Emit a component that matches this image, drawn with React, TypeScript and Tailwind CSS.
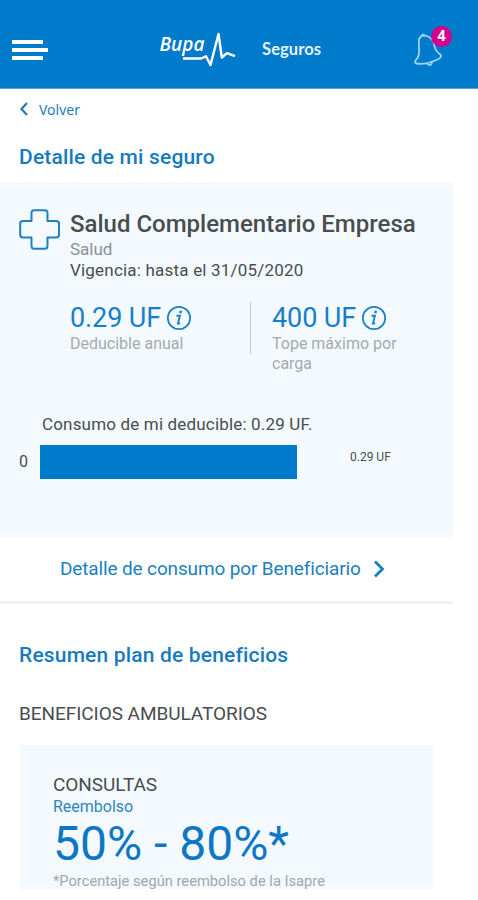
import type { ReactNode } from "react";

const plan = {
  nombre: "Salud Complementario Empresa",
  tipo: "Salud",
  vigencia: "Vigencia: hasta el 31/05/2020",
};

function InfoIcon() {
  return (
    <svg viewBox="0 0 26 26" className="w-[26px] h-[26px] shrink-0" fill="none" stroke="#1480c8">
      <circle cx="13" cy="13" r="11.2" strokeWidth="1.7" />
      <path d="M10.500 10.800H13.900L12 18.600H14.200" strokeWidth="1.900" />
      <path d="M14.300 8.300L14.900 5.800" strokeWidth="2.400" />
    </svg>
  );
}

function Amount({ value, children }: { value: string; children: ReactNode }) {
  return (
    <div>
      <div className="flex items-center h-8 gap-[5px]">
        <span className="text-[27px] leading-8 tracking-[-0.1px] text-[#1480c8]">{value}</span>
        <InfoIcon />
      </div>
      <p className="text-[16px] leading-[20px] text-[#a5abaf]">{children}</p>
    </div>
  );
}

function Header() {
  return (
    <header className="h-[89px] bg-[#007acb] border-b border-[#4da2da] flex items-start relative">
      <div className="ml-3 mt-10 flex flex-col gap-1">
        <span className="block h-[4px] w-[31px] bg-white" />
        <span className="block h-[4px] w-[36px] bg-white" />
        <span className="block h-[4px] w-[31px] bg-white" />
      </div>
      <svg viewBox="0 0 80 42" className="w-20 h-[42px] ml-[110px] mt-[28px]">
        <text x="1.5" y="23" fill="#fff" fontFamily="Open Sans" fontWeight="600" fontStyle="italic" fontSize="19">Bupa</text>
        <path d="M25 30.500H43L48 28.300L52.500 37L60.500 6L63.800 29.500L69 25.200L77 28.200" fill="none" stroke="#fff" strokeWidth="2.4" strokeLinejoin="round" />
      </svg>
      <span className="ml-[24px] mt-[38px] text-[16.5px] leading-[22px] font-bold text-[#e3f1fa] font-['Lato',sans-serif] tracking-[0.1px]">Seguros</span>
      <svg viewBox="0 0 32 36" className="absolute left-[412px] top-[32px] w-8 h-9" fill="none" stroke="#9fd3f7" strokeWidth="1.8" strokeLinejoin="round">
        <path d="M8 5.500C9.500 3.700 12.500 2.900 14.700 4C20 5.500 21.800 9.500 22.400 14C23 18 25.500 20.500 28.500 22.800C30 24.500 28.500 26 25.500 27.500C18 31 10 32.500 4.500 31.500C2.500 31 2.500 29.500 4.300 27.700C7.500 24.500 7.500 20 7 15C6.600 10 6.500 7 8 5.500Z" />
        <path d="M9 4.500L10.700 2.500L13 4M15 31C16 34.500 19.500 33.500 20 30.300" />
      </svg>
      <span className="absolute left-[431px] top-[26px] size-[21px] rounded-full bg-[#d2008c] text-white text-[15px] leading-[21px] font-bold text-center">4</span>
    </header>
  );
}

export default function App() {
  return (
    <div className="w-full h-[900px] overflow-hidden bg-white font-[Roboto,sans-serif] text-[#484d50] whitespace-nowrap">
      <Header />

      <a className="flex items-center h-[42px] pl-5 text-[#1c7dbb] text-[15px]">
        <svg viewBox="0 0 8 14" className="w-2 h-[14px] mr-[11px] mb-0.5" fill="none" stroke="#1c7dbb" strokeWidth="2.2">
          <path d="M7 1L1.500 7L7 13" />
        </svg>
        <span className="font-['Noto_Sans',sans-serif] text-[14px] mb-0.5">Volver</span>
      </a>
      <h1 className="pl-[19px] h-[51px] leading-[52px] text-[21px] tracking-[0.17px] font-medium text-[#177abf]">Detalle de mi seguro</h1>

      {/* Plan */}
      <section className="w-[453px] h-[355px] bg-[#f4f9fe] pt-[26px]">
        <div className="flex pl-[19px]">
          <svg viewBox="0 0 42 42" className="w-[42px] h-[42px] mr-[9px] mt-px" fill="none" stroke="#1c80c4" strokeWidth="2" strokeLinejoin="round">
            <path d="M15 1.200H26Q28.500 1.200 28.500 3.700V12H37Q40 12 40 14.700V25.500Q40 28.500 37 28.500H28.500V37Q28.500 39.700 26 39.700H15Q12.500 39.700 12.500 37V28.500H4Q1.200 28.500 1.200 25.500V14.700Q1.200 12 4 12H12.500V3.700Q12.500 1.200 15 1.200Z" />
          </svg>
          <div>
            <h2 className="text-[24px] leading-8 font-medium">{plan.nombre}</h2>
            <p className="text-[17px] leading-[19px] text-[#8b9195]">{plan.tipo}</p>
            <p className="text-[17px] leading-[23px] tracking-[0.2px]">{plan.vigencia}</p>
          </div>
        </div>

        <div className="flex pl-[70px] mt-5">
          <div className="w-[181px] h-[52px] border-r border-[#c6cbd0]">
            <Amount value="0.29 UF">Deducible anual</Amount>
          </div>
          <div className="pl-[21px]">
            <Amount value="400 UF">
              Tope máximo por
              <br />
              carga
            </Amount>
          </div>
        </div>

        <p className="pl-[42px] mt-[39px] text-[17px] leading-[22px] tracking-[0.17px]">Consumo de mi deducible: 0.29 UF.</p>
        <div className="flex items-center mt-[10px]">
          <span className="w-10 pl-[19px] text-[16px] leading-5">0</span>
          <div className="w-[257px] h-[34px] bg-[#007acb]" />
          <span className="ml-[53px] mb-[11px] text-[12px] leading-4">0.29 UF</span>
        </div>
      </section>

      <a className="w-[453px] h-[67px] border-b-[3px] border-[#f1f2f3] flex items-center pl-[60px] text-[#1b80c0]">
        <span className="text-[19px] tracking-[-0.14px] mt-px">Detalle de consumo por Beneficiario</span>
        <svg viewBox="0 0 12 18" className="w-3 h-[18px] ml-3" fill="none" stroke="#1480c8" strokeWidth="2.8">
          <path d="M2 1.500L9.500 9L2 16.500" />
        </svg>
      </a>

      {/* Beneficios */}
      <section className="pl-5 pt-[37px]">
        <h2 className="-ml-px text-[21px] leading-7 tracking-[0.17px] font-medium text-[#177abf]">Resumen plan de beneficios</h2>
        <h3 className="-ml-px mt-[33px] text-[19px] leading-6 tracking-[-0.06px]">BENEFICIOS AMBULATORIOS</h3>
        <div className="mt-[19px] w-[413px] h-[144px] bg-[#f4f9fe] pl-[33px] pt-7">
          <h4 className="text-[19px] leading-6 tracking-[-0.06px]">CONSULTAS</h4>
          <p className="text-[16px] leading-5 text-[#2f86bd]">Reembolso</p>
          <p className="text-[48px] leading-[53px] text-[#0c77c4]">50% - 80%*</p>
          <p className="text-[14.7px] leading-[23px] text-[#a0a7ab]">*Porcentaje según reembolso de la Isapre</p>
        </div>
      </section>
    </div>
  );
}
